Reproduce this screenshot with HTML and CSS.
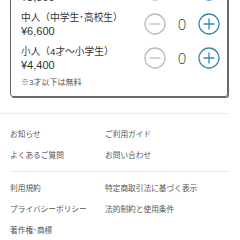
FILE: index.html
```html
<!DOCTYPE html>
<html lang="ja">
<head>
<meta charset="utf-8">
<link rel="stylesheet" href="styles.css">
</head>
<body>
<div class="card">
  <div class="row">
    <div class="info"><div class="name">大人</div><div class="price">¥8,800</div></div>
    <div class="counter">
      <svg class="btn minus" viewBox="0 0 22 22"><circle cx="11" cy="11" r="10"/><path d="M5.5 11h11"/></svg>
      <span class="num">0</span>
      <svg class="btn plus" viewBox="0 0 22 22"><circle cx="11" cy="11" r="10"/><path d="M5.5 11h11M11 5.5v11"/></svg>
    </div>
  </div>
  <div class="row">
    <div class="info"><div class="name">中人（中学生･高校生）</div><div class="price">¥6,600</div></div>
    <div class="counter">
      <svg class="btn minus" viewBox="0 0 22 22"><circle cx="11" cy="11" r="10"/><path d="M5.5 11h11"/></svg>
      <span class="num">0</span>
      <svg class="btn plus" viewBox="0 0 22 22"><circle cx="11" cy="11" r="10"/><path d="M5.5 11h11M11 5.5v11"/></svg>
    </div>
  </div>
  <div class="row">
    <div class="info"><div class="name">小人（4才〜小学生）</div><div class="price">¥4,400</div></div>
    <div class="counter">
      <svg class="btn minus" viewBox="0 0 22 22"><circle cx="11" cy="11" r="10"/><path d="M5.5 11h11"/></svg>
      <span class="num">0</span>
      <svg class="btn plus" viewBox="0 0 22 22"><circle cx="11" cy="11" r="10"/><path d="M5.5 11h11M11 5.5v11"/></svg>
    </div>
  </div>
  <div class="note">※3才以下は無料</div>
</div>
<div class="divider full"></div>
<div class="links first">
  <a>お知らせ</a><a>ご利用ガイド</a>
  <a>よくあるご質問</a><a>お問い合わせ</a>
</div>
<div class="divider inset"></div>
<div class="links second">
  <a>利用規約</a><a>特定商取引法に基づく表示</a>
  <a>プライバシーポリシー</a><a>法的制約と使用条件</a>
  <a>著作権･商標</a>
</div>
</body>
</html>
```
FILE: styles.css
```css
html, body {
  margin: 0;
  padding: 0;
  background: #fff;
  width: 240px;
  height: 240px;
  overflow: hidden;
  font-family: "Liberation Sans", "Noto Sans CJK JP", sans-serif;
  color: #333;
}
.card {
  margin: -36px 12px 0 10px;
  padding: 8px 7px 6px 10px;
  border: 1px solid #5f6b73;
  border-radius: 3px;
  box-shadow: 1px 1px 0 #5f6b73;
}
.row {
  display: flex;
  align-items: center;
  justify-content: space-between;
  height: 34px;
}
.info {
  display: flex;
  flex-direction: column;
}
.name {
  font-size: 9.7px;
  line-height: 12px;
}
.price {
  font-size: 11px;
  line-height: 12px;
  margin-top: 1px;
}
.counter {
  display: flex;
  align-items: center;
}
.btn {
  width: 22px;
  height: 22px;
  fill: none;
  stroke-width: 1.3;
}
.minus { stroke: #b8bcbf; }
.plus { stroke: #3a88ad; }
.num {
  width: 32px;
  text-align: center;
  font-family: "Open Sans", sans-serif;
  font-weight: 300;
  font-size: 15px;
  color: #333;
}
.note {
  font-size: 8px;
  line-height: 14px;
  color: #555;
  margin-top: 1px;
}
.divider {
  height: 1px;
  background: #ececec;
}
.divider.full {
  margin: 16px 10px 0 0;
}
.divider.inset {
  margin: 0 10px;
}
.links {
  display: grid;
  grid-template-columns: 95px 1fr;
  padding-left: 10px;
  font-size: 7.7px;
  line-height: 21px;
  color: #555;
}
.links.first {
  padding-top: 10px;
  padding-bottom: 5px;
}
.links.second {
  padding-top: 6px;
}
.links a {
  white-space: nowrap;
}
```
